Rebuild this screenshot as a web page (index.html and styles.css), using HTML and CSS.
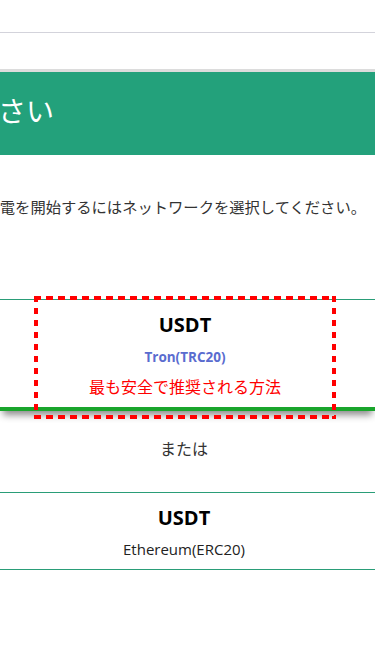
FILE: index.html
```html
<!DOCTYPE html>
<html lang="ja">
<head>
  <meta charset="UTF-8" />
  <meta name="viewport" content="width=device-width, initial-scale=1" />
  <title>ネットワークを選択してください</title>
  <link rel="stylesheet" href="styles.css">
</head>
<body>
  <div class="topbar"></div>
  <div class="subbar"></div>

  <div class="hero">
    <h1 class="hero-title"><span>ネットワークを選択してください</span></h1>
  </div>

  <div class="intro">
    <p><span>充電を開始するにはネットワークを選択してください。</span></p>
  </div>

  <!-- Network 1 : recommandé -->
  <div class="network active">
    <a href="#" class="network-link focused">
      <div class="coin">USDT</div>
      <div class="chain">Tron(TRC20)</div>
      <div class="note">最も安全で推奨される方法</div>
    </a>
  </div>

  <div class="or">または</div>

  <!-- Network 2 -->
  <div class="network">
    <a href="#" class="network-link">
      <div class="coin">USDT</div>
      <div class="chain plain">Ethereum(ERC20)</div>
    </a>
  </div>
</body>
</html>
```

FILE: styles.css
```css
body {
  font-family: "Open Sans", "Noto Sans CJK JP", sans-serif;
  margin: 0;
  background-color: #fff;
  color: #333;
  overflow-x: hidden;
}

.topbar {
  height: 32px;
  border-bottom: 1px solid #d3d3db;
}

.subbar {
  height: 36px;
  border-bottom: 3px solid #dcdcdc;
}

.hero {
  height: 83px;
  background-color: #23a17b;
  display: flex;
  align-items: center;
}

.hero-title {
  margin: 0 0 8px 0;
  width: 54px;
  display: flex;
  justify-content: flex-end;
  white-space: nowrap;
  color: #fff;
  font-weight: normal;
  font-size: 28px;
  line-height: 36px;
  font-family: "Noto Sans CJK JP", sans-serif;
}

.intro p {
  margin: 39px 0 0 0;
  width: 366px;
  display: flex;
  justify-content: flex-end;
  white-space: nowrap;
  font-size: 15.3px;
  line-height: 24px;
  font-family: "Noto Sans CJK JP", sans-serif;
}

.network {
  border-top: 1px solid #2a9d78;
  border-bottom: 1px solid #2a9d78;
  text-align: center;
}

.network.active {
  margin-top: 81px;
  border-bottom: 4px solid #19a52c;
  box-shadow: 0 7px 7px -3px rgba(0, 0, 0, 0.45);
}

.network-link {
  display: block;
  margin-right: 7px;
  padding: 13px 0 10px;
  text-decoration: none;
}

/* focus ring drawn as dashes */
.network-link.focused {
  position: relative;
  margin: 0 0 -8px 38px;
  width: 294px;
  padding-bottom: 18px;
}

.network-link.focused::after {
  content: "";
  position: absolute;
  top: -4px;
  right: -4px;
  bottom: -4px;
  left: -4px;
  background:
    repeating-linear-gradient(to right, #f00 0 7px, transparent 7px 12px) top / 100% 4px no-repeat,
    repeating-linear-gradient(to right, #f00 0 7px, transparent 7px 12px) bottom / 100% 4px no-repeat,
    repeating-linear-gradient(to bottom, #f00 0 6px, transparent 6px 12px) left / 4px 100% no-repeat,
    repeating-linear-gradient(to bottom, #f00 0 6px, transparent 6px 12px) right / 4px 100% no-repeat;
}

.coin {
  color: #000;
  font-weight: bold;
  font-size: 20px;
  line-height: 24px;
}

.chain {
  margin-top: 10px;
  color: #5a6ccf;
  font-weight: bold;
  font-size: 13.5px;
  line-height: 20px;
}

.chain.plain {
  margin-top: 9px;
  color: #222;
  font-weight: normal;
  font-size: 15px;
}

.note {
  margin-top: 8px;
  color: #ff0000;
  font-size: 16px;
  line-height: 22px;
  font-family: "Noto Sans CJK JP", sans-serif;
}

.or {
  margin: 25px 7px 32px 0;
  text-align: center;
  font-size: 16px;
  line-height: 24px;
  font-family: "Noto Sans CJK JP", sans-serif;
}
```
